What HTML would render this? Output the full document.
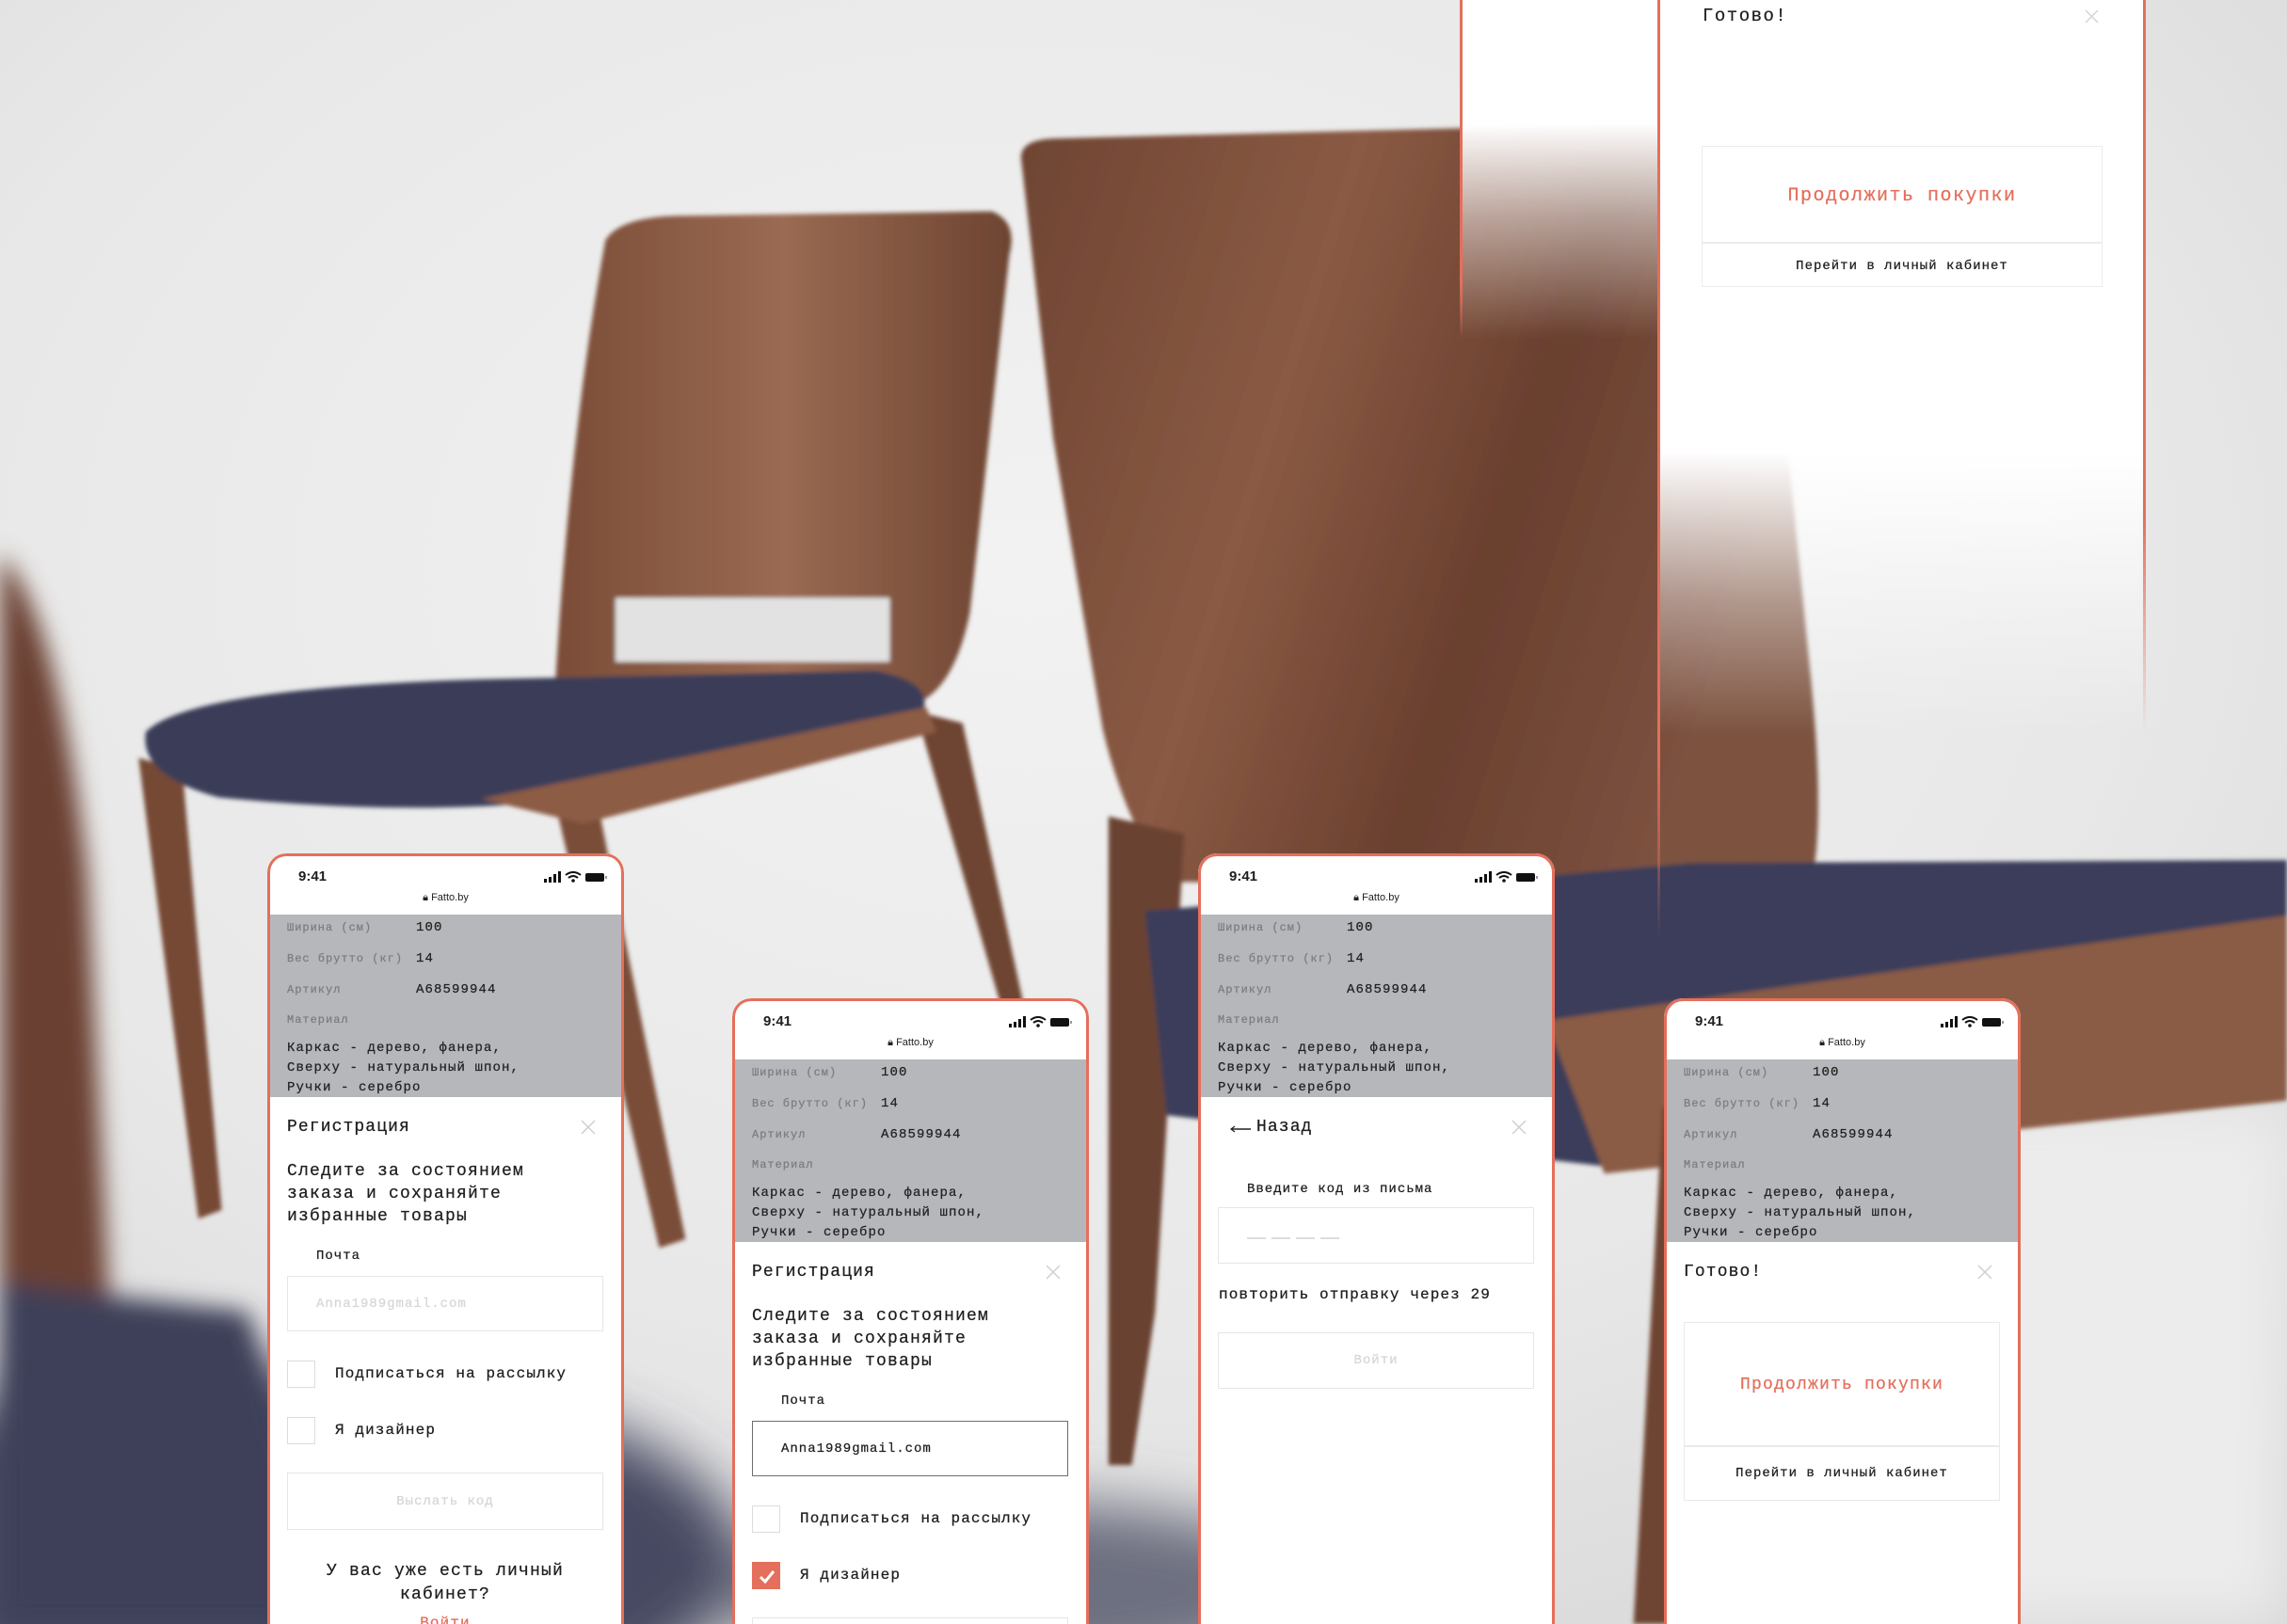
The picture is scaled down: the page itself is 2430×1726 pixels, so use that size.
<!DOCTYPE html>
<html><head><meta charset="utf-8"><style>
*{margin:0;padding:0;box-sizing:border-box}
html{width:2430px;height:1726px;overflow:hidden}
body{width:2430px;height:1726px;overflow:hidden;position:relative;background:#e6e6e6;font-family:"Liberation Mono","DejaVu Sans Mono",monospace;color:#1e1e1e}
.bg{position:absolute;left:0;top:0}
.ph{position:absolute;width:379px;background:#fff;border-radius:20px 20px 0 0;overflow:hidden}
.bd{position:absolute;left:0;right:0;top:0;bottom:0;border:3px solid #e46f5c;border-bottom:none;border-radius:20px 20px 0 0;z-index:5}
.a{position:absolute;white-space:pre;-webkit-text-stroke:0.25px currentColor}
.time{left:33px;top:15px;font:bold 15px "Liberation Sans",sans-serif;line-height:20px;-webkit-text-stroke:0}
.ico{position:absolute;left:294px;top:19px}
.url{left:0;width:379px;text-align:center;top:40px;font:11px "Liberation Sans",sans-serif;line-height:14px;color:#222;-webkit-text-stroke:0}
.gray{position:absolute;left:0;top:65px;width:379px;height:194px;background:#b6b7bb}
.lb{font-size:12px;letter-spacing:1px;color:#7c7d82;line-height:20px;left:21px}
.vl{font-size:14px;letter-spacing:1.1px;color:#222;line-height:20px;left:158px}
.mat{left:21px;top:197px;font-size:14px;letter-spacing:1.1px;line-height:21px;color:#222}
.ttl{left:21px;top:279px;font-size:18px;letter-spacing:1.1px;line-height:24px}
.x{position:absolute;left:333px;top:283px;width:16px;height:16px}
.h{left:21px;top:326px;font-size:18px;letter-spacing:1.2px;line-height:24px}
.s14{font-size:14px;letter-spacing:1px;line-height:20px}
.s16{font-size:16px;letter-spacing:1.1px;line-height:20px}
.box{position:absolute;left:21px;width:336px;border:1.5px solid #e6e6e6}
.cb{position:absolute;left:21px;width:30px;height:29px;border:1px solid #dcdcdc}
.ctr{left:21px;width:336px;text-align:center}
</style></head><body>
<svg class="bg" width="2430" height="1726" viewBox="0 0 1568 1114" preserveAspectRatio="none">
<defs>
<radialGradient id="g0" cx="0.45" cy="0.35" r="0.8"><stop offset="0" stop-color="#f2f2f2"/><stop offset="0.6" stop-color="#e8e8e8"/><stop offset="1" stop-color="#d6d6d6"/></radialGradient>
<linearGradient id="w1" x1="0" y1="0" x2="1" y2="0.3"><stop offset="0" stop-color="#6e4432"/><stop offset="0.4" stop-color="#8a5a44"/><stop offset="0.7" stop-color="#6a3f2e"/><stop offset="1" stop-color="#7d5240"/></linearGradient>
<linearGradient id="w2" x1="0" y1="0" x2="1" y2="0"><stop offset="0" stop-color="#7a4c37"/><stop offset="0.5" stop-color="#9a6a52"/><stop offset="1" stop-color="#6d4431"/></linearGradient>
<filter id="b1"><feGaussianBlur stdDeviation="1.5"/></filter>
<filter id="b2"><feGaussianBlur stdDeviation="8"/></filter>
<filter id="b3"><feGaussianBlur stdDeviation="20"/></filter>
</defs>
<rect width="1568" height="1114" fill="url(#g0)"/>
<g filter="url(#b3)">
<ellipse cx="180" cy="1070" rx="330" ry="130" fill="#474a62"/>
<ellipse cx="700" cy="1090" rx="200" ry="60" fill="#6d6f80"/>
<rect x="1300" y="760" width="268" height="354" fill="#ececec"/>
</g>
<g filter="url(#b2)">
<path d="M0,380 Q40,420 60,600 L75,900 Q60,1000 40,1114 L0,1114Z" fill="#6b4031"/>
<path d="M0,880 L170,900 L230,1114 L0,1114Z" fill="#3e4159"/>
</g>
<g filter="url(#b1)">
<path d="M415,165 Q425,148 470,148 L680,145 Q698,152 692,175 L665,420 Q655,470 630,482 L380,482 Q390,300 415,165Z" fill="url(#w2)"/>
<rect x="422" y="410" width="188" height="44" fill="#e2e2e2"/>
<path d="M95,520 L125,528 L152,830 L136,836Z" fill="#764a36"/>
<path d="M380,548 L410,552 L470,850 L452,856Z" fill="#7a4d39"/>
<path d="M628,488 L660,496 L702,690 L688,696Z" fill="#6e4532"/>
<path d="M100,502 Q130,472 330,466 L600,460 Q642,468 632,490 L420,545 Q300,562 150,547 Q95,532 100,502Z" fill="#3b3e59"/>
<path d="M330,548 L635,485 L642,502 L400,565Z" fill="#8c5c45"/>
<path d="M700,108 Q700,96 722,95 L1000,88 L1140,85 Q1190,92 1215,200 L1240,450 Q1252,560 1242,605 L800,605 Q770,560 756,500 L722,300Z" fill="url(#w1)"/>
<path d="M760,560 L812,572 L792,900 L776,1005 L760,1005Z" fill="#6a4231"/>
<path d="M785,625 L1160,592 L1568,590 L1568,705 L1100,800 L800,765Z" fill="#3b3e5a"/>
<path d="M1060,700 L1568,628 L1568,755 L1100,805Z" fill="#8a5b44"/>
<path d="M1140,760 L1200,742 L1162,1114 L1120,1114Z" fill="#6e4432"/>
</g>
</svg>

<div style="position:absolute;left:1552px;top:0;width:210px;height:360px;background:linear-gradient(#fff 0,#fff 130px,rgba(255,255,255,0.5) 230px,rgba(255,255,255,0) 360px)"></div>
<div style="position:absolute;left:1762px;top:0;width:517px;height:780px;background:linear-gradient(#fff 0,#fff 480px,rgba(255,255,255,0.4) 640px,rgba(255,255,255,0) 780px)"></div>
<div style="position:absolute;left:1551px;top:0;width:3px;height:360px;background:linear-gradient(#e46f5c 0,#e46f5c 300px,rgba(228,111,92,0) 360px)"></div>
<div style="position:absolute;left:1761px;top:0;width:3px;height:1000px;background:linear-gradient(#e46f5c 0,#e46f5c 800px,rgba(228,111,92,0) 1000px)"></div>
<div style="position:absolute;left:2277px;top:0;width:3px;height:780px;background:linear-gradient(#e46f5c 0,#e46f5c 550px,rgba(228,111,92,0) 780px)"></div>
<div class="a" style="left:1809px;top:5px;font-size:19px;letter-spacing:1.5px;line-height:24px">Готово!</div>
<svg style="position:absolute;left:2215px;top:10px" width="15" height="15"><path d="M1,1L14,14M14,1L1,14" stroke="#d4d4d4" stroke-width="1.5"/></svg>
<div style="position:absolute;left:1808px;top:155px;width:426px;height:150px;border:1.5px solid #ececec"></div>
<div style="position:absolute;left:1808px;top:257px;width:426px;height:1.5px;background:#ececec"></div>
<div class="a" style="left:1808px;width:426px;text-align:center;top:196px;font-size:20px;letter-spacing:1.5px;color:#e46f5c;line-height:26px">Продолжить покупки</div>
<div class="a" style="left:1808px;width:426px;text-align:center;top:273px;font-size:14px;letter-spacing:1px;line-height:20px">Перейти в личный кабинет</div>

<div class="ph" style="left:284px;top:907px;height:819px">
<div class="bd"></div>
<div class="a time">9:41</div>
<svg class="ico" width="68" height="13"><rect x="0" y="8" width="3" height="4" fill="#111"/><rect x="5" y="6" width="3" height="6" fill="#111"/><rect x="10" y="3" width="3" height="9" fill="#111"/><rect x="15" y="0" width="3" height="12" fill="#111"/><path d="M23,4 Q31,-2 39,4 M26,7 Q31,3 36,7" stroke="#111" stroke-width="2" fill="none"/><circle cx="31" cy="10" r="1.8" fill="#111"/><rect x="44" y="2" width="20" height="9" rx="2" fill="#111"/><rect x="65" y="5" width="2" height="3" fill="#999"/></svg>
<div class="a url">🔒︎ Fatto.by</div>
<div class="gray"></div>
<div class="a lb" style="top:69px">Ширина (см)</div><div class="a vl" style="top:69px">100</div>
<div class="a lb" style="top:102px">Вес брутто (кг)</div><div class="a vl" style="top:102px">14</div>
<div class="a lb" style="top:135px">Артикул</div><div class="a vl" style="top:135px">A68599944</div>
<div class="a lb" style="top:167px">Материал</div>
<div class="a mat">Каркас - дерево, фанера,
Сверху - натуральный шпон,
Ручки - серебро</div>
<div class="a ttl">Регистрация</div>
<svg class="x" width="16" height="16"><path d="M1,1L15,15M15,1L1,15" stroke="#cfcfcf" stroke-width="1.5"/></svg>
<div class="a h">Следите за состоянием
заказа и сохраняйте
избранные товары</div>
<div class="a s14" style="left:52px;top:418px">Почта</div>
<div class="box" style="top:449px;height:59px"></div>
<div class="a s14" style="left:52px;top:469px;color:#d6d6d6">Anna1989gmail.com</div>
<div class="cb" style="top:539px"></div><div class="a s16" style="left:72px;top:543px">Подписаться на рассылку</div>
<div class="cb" style="top:599px"></div><div class="a s16" style="left:72px;top:603px">Я дизайнер</div>
<div class="box" style="top:658px;height:61px"></div>
<div class="a s14 ctr" style="top:679px;color:#d6d6d6">Выслать код</div>
<div class="a ctr" style="top:751px;font-size:18px;letter-spacing:1.2px;line-height:25px">У вас уже есть личный
кабинет?</div>
<div class="a ctr s16" style="top:808px;color:#e46f5c">Войти</div>
</div>

<div class="ph" style="left:778px;top:1061px;height:665px">
<div class="bd"></div>
<div class="a time">9:41</div>
<svg class="ico" width="68" height="13"><rect x="0" y="8" width="3" height="4" fill="#111"/><rect x="5" y="6" width="3" height="6" fill="#111"/><rect x="10" y="3" width="3" height="9" fill="#111"/><rect x="15" y="0" width="3" height="12" fill="#111"/><path d="M23,4 Q31,-2 39,4 M26,7 Q31,3 36,7" stroke="#111" stroke-width="2" fill="none"/><circle cx="31" cy="10" r="1.8" fill="#111"/><rect x="44" y="2" width="20" height="9" rx="2" fill="#111"/><rect x="65" y="5" width="2" height="3" fill="#999"/></svg>
<div class="a url">🔒︎ Fatto.by</div>
<div class="gray"></div>
<div class="a lb" style="top:69px">Ширина (см)</div><div class="a vl" style="top:69px">100</div>
<div class="a lb" style="top:102px">Вес брутто (кг)</div><div class="a vl" style="top:102px">14</div>
<div class="a lb" style="top:135px">Артикул</div><div class="a vl" style="top:135px">A68599944</div>
<div class="a lb" style="top:167px">Материал</div>
<div class="a mat">Каркас - дерево, фанера,
Сверху - натуральный шпон,
Ручки - серебро</div>
<div class="a ttl">Регистрация</div>
<svg class="x" width="16" height="16"><path d="M1,1L15,15M15,1L1,15" stroke="#cfcfcf" stroke-width="1.5"/></svg>
<div class="a h">Следите за состоянием
заказа и сохраняйте
избранные товары</div>
<div class="a s14" style="left:52px;top:418px">Почта</div>
<div class="box" style="top:449px;height:59px;border-color:#6e6e72"></div>
<div class="a s14" style="left:52px;top:469px">Anna1989gmail.com</div>
<div class="cb" style="top:539px"></div><div class="a s16" style="left:72px;top:543px">Подписаться на рассылку</div>
<div class="cb" style="top:599px;background:#e46f5c;border-color:#e46f5c"><svg width="30" height="29"><path d="M8,15L13,20L22,9" stroke="#fff" stroke-width="3" fill="none"/></svg></div><div class="a s16" style="left:72px;top:603px">Я дизайнер</div>
<div class="box" style="top:658px;height:61px"></div>
</div>

<div class="ph" style="left:1273px;top:907px;height:819px">
<div class="bd"></div>
<div class="a time">9:41</div>
<svg class="ico" width="68" height="13"><rect x="0" y="8" width="3" height="4" fill="#111"/><rect x="5" y="6" width="3" height="6" fill="#111"/><rect x="10" y="3" width="3" height="9" fill="#111"/><rect x="15" y="0" width="3" height="12" fill="#111"/><path d="M23,4 Q31,-2 39,4 M26,7 Q31,3 36,7" stroke="#111" stroke-width="2" fill="none"/><circle cx="31" cy="10" r="1.8" fill="#111"/><rect x="44" y="2" width="20" height="9" rx="2" fill="#111"/><rect x="65" y="5" width="2" height="3" fill="#999"/></svg>
<div class="a url">🔒︎ Fatto.by</div>
<div class="gray"></div>
<div class="a lb" style="top:69px">Ширина (см)</div><div class="a vl" style="top:69px">100</div>
<div class="a lb" style="top:102px">Вес брутто (кг)</div><div class="a vl" style="top:102px">14</div>
<div class="a lb" style="top:135px">Артикул</div><div class="a vl" style="top:135px">A68599944</div>
<div class="a lb" style="top:167px">Материал</div>
<div class="a mat">Каркас - дерево, фанера,
Сверху - натуральный шпон,
Ручки - серебро</div>
<svg style="position:absolute;left:33px;top:288px" width="24" height="10"><path d="M2,5H23" stroke="#222" stroke-width="1.5"/><path d="M6,2L2,5L6,8" stroke="#222" stroke-width="1.2" fill="none"/></svg>
<div class="a ttl" style="left:62px">Назад</div>
<svg class="x" width="16" height="16"><path d="M1,1L15,15M15,1L1,15" stroke="#cfcfcf" stroke-width="1.5"/></svg>
<div class="a s14" style="left:52px;top:347px">Введите код из письма</div>
<div class="box" style="top:376px;height:60px"></div>
<div style="position:absolute;left:52px;top:408px;width:20px;height:1.5px;background:#ddd"></div>
<div style="position:absolute;left:78px;top:408px;width:20px;height:1.5px;background:#ddd"></div>
<div style="position:absolute;left:104px;top:408px;width:20px;height:1.5px;background:#ddd"></div>
<div style="position:absolute;left:130px;top:408px;width:20px;height:1.5px;background:#ddd"></div>
<div class="a s16" style="left:22px;top:459px">повторить отправку через 29</div>
<div class="box" style="top:509px;height:60px"></div>
<div class="a s14 ctr" style="top:529px;color:#d6d6d6">Войти</div>
</div>

<div class="ph" style="left:1768px;top:1061px;height:665px">
<div class="bd"></div>
<div class="a time">9:41</div>
<svg class="ico" width="68" height="13"><rect x="0" y="8" width="3" height="4" fill="#111"/><rect x="5" y="6" width="3" height="6" fill="#111"/><rect x="10" y="3" width="3" height="9" fill="#111"/><rect x="15" y="0" width="3" height="12" fill="#111"/><path d="M23,4 Q31,-2 39,4 M26,7 Q31,3 36,7" stroke="#111" stroke-width="2" fill="none"/><circle cx="31" cy="10" r="1.8" fill="#111"/><rect x="44" y="2" width="20" height="9" rx="2" fill="#111"/><rect x="65" y="5" width="2" height="3" fill="#999"/></svg>
<div class="a url">🔒︎ Fatto.by</div>
<div class="gray"></div>
<div class="a lb" style="top:69px">Ширина (см)</div><div class="a vl" style="top:69px">100</div>
<div class="a lb" style="top:102px">Вес брутто (кг)</div><div class="a vl" style="top:102px">14</div>
<div class="a lb" style="top:135px">Артикул</div><div class="a vl" style="top:135px">A68599944</div>
<div class="a lb" style="top:167px">Материал</div>
<div class="a mat">Каркас - дерево, фанера,
Сверху - натуральный шпон,
Ручки - серебро</div>
<div class="a ttl">Готово!</div>
<svg class="x" width="16" height="16"><path d="M1,1L15,15M15,1L1,15" stroke="#cfcfcf" stroke-width="1.5"/></svg>
<div class="box" style="top:344px;height:190px;border-color:#eaeaea"></div>
<div style="position:absolute;left:21px;top:475px;width:336px;height:1.5px;background:#eaeaea"></div>
<div class="a ctr" style="top:399px;font-size:18px;letter-spacing:1.2px;line-height:24px;color:#e46f5c">Продолжить покупки</div>
<div class="a ctr s14" style="top:495px">Перейти в личный кабинет</div>
</div>
</body></html>
